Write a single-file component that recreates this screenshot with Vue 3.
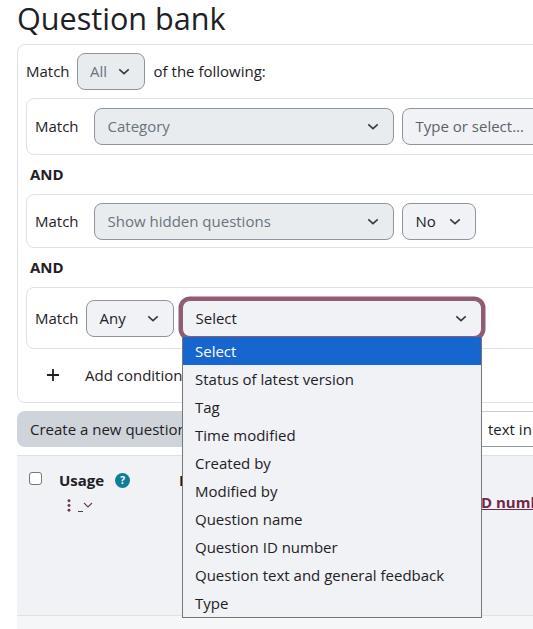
<script setup>
const options = ['Select','Status of latest version','Tag','Time modified','Created by','Modified by','Question name','Question ID number','Question text and general feedback','Type']
</script>

<template>
  <div class="page">
    <h1 class="title">Question bank</h1>
    <section class="filter">
      <div class="top-row">
        <span class="up">Match</span>
        <div class="sel off w-all"><span class="up">All</span><svg class="chev" viewBox="0 0 14 8"><path d="M1.5 1.5 7 6.5l5.5-5"/></svg></div>
        <span class="following up">of the following:</span>
      </div>
      <div class="cond c1">
        <span class="lbl up">Match</span>
        <div class="sel off w-main"><span class="up">Category</span><svg class="chev" viewBox="0 0 14 8"><path d="M1.5 1.5 7 6.5l5.5-5"/></svg></div>
        <div class="sel w-type"><span class="muted up">Type or select...</span></div>
      </div>
      <div class="and a1">AND</div>
      <div class="cond c2">
        <span class="lbl">Match</span>
        <div class="sel off w-main"><span>Show hidden questions</span><svg class="chev" viewBox="0 0 14 8"><path d="M1.5 1.5 7 6.5l5.5-5"/></svg></div>
        <div class="sel w-no"><span>No</span><svg class="chev" viewBox="0 0 14 8"><path d="M1.5 1.5 7 6.5l5.5-5"/></svg></div>
      </div>
      <div class="and a2">AND</div>
      <div class="cond c3">
        <span class="lbl">Match</span>
        <div class="sel w-any"><span>Any</span><svg class="chev" viewBox="0 0 14 8"><path d="M1.5 1.5 7 6.5l5.5-5"/></svg></div>
        <div class="focus-wrap">
          <div class="sel focused"><span>Select</span><svg class="chev" viewBox="0 0 14 8"><path d="M1.5 1.5 7 6.5l5.5-5"/></svg></div>
          <ul class="menu">
            <li v-for="(o, i) in options" :key="o" :class="{ active: i === 0 }">{{ o }}</li>
          </ul>
        </div>
      </div>
      <div class="add">
        <svg class="plus" viewBox="0 0 14 14"><path d="M7 1v12M1 7h12"/></svg>
        <span>Add condition</span>
      </div>
    </section>

    <div class="actions">
      <button class="create">Create a new question ...</button>
      <div class="search"><span class="hint"></span><span class="search-text">text in question</span></div>
    </div>

    <div class="table-head">
      <div class="check-col"><span class="check"></span></div>
      <div class="usage-col">
        <div class="usage-title"><b>Usage</b><span class="help">?</span></div>
        <div class="usage-menu">
          <svg class="kebab" viewBox="0 0 4 14"><circle cx="2" cy="2" r="1.6"/><circle cx="2" cy="7" r="1.6"/><circle cx="2" cy="12" r="1.6"/></svg>
          <span class="dash"></span>
          <svg class="mini" viewBox="0 0 10 6"><path d="M1 1l4 4 4-4"/></svg>
        </div>
      </div>
      <div class="last-col"><b>Last used</b></div>
      <div class="id-col"><a>ID number</a></div>
    </div>
    <div class="table-foot"></div>
  </div>
</template>

<style>
html, body { margin: 0; background: #fff; }
</style>

<style scoped>
.page {
  width: 533px;
  height: 629px;
  overflow: hidden;
  box-sizing: border-box;
  padding: 0 0 0 17px;
  font-family: "Open Sans", "Noto Sans", sans-serif;
  font-size: 15px;
  color: #1d2125;
  background: #fff;
}
.title {
  margin: 0;
  height: 44px;
  font-size: 30.6px;
  line-height: 36px;
  font-weight: 400;
  white-space: nowrap;
}
.up { transform: translateY(-1px); }
.filter {
  width: 560px;
  height: 359px;
  box-sizing: border-box;
  border: 1px solid #dee2e6;
  border-radius: 8px;
  padding: 8px 8px 0;
}
.top-row {
  display: flex;
  align-items: center;
  height: 37px;
  gap: 7px;
}
.following { margin-left: 2px; }
.sel {
  display: flex;
  align-items: center;
  justify-content: space-between;
  box-sizing: border-box;
  height: 37px;
  padding: 0 14px 0 12.5px;
  flex-shrink: 0;
  border: 1px solid #8f959e;
  border-radius: 8px;
  background: #f1f2f6;
  white-space: nowrap;
}
.off { background: #e9ecef; color: #6a737b; }
.w-all { width: 68px; }
.w-main { width: 300px; }
.w-type { width: 160px; }
.w-no { width: 74px; }
.w-any { width: 88px; }
.muted { color: #5c6268; }
.chev {
  width: 12px;
  height: 7px;
  fill: none;
  stroke: #343a40;
  stroke-width: 1.8;
  flex-shrink: 0;
}
.cond {
  display: flex;
  align-items: center;
  box-sizing: border-box;
  border: 1px solid #dee2e6;
  border-radius: 8px;
  padding-left: 8px;
  width: 540px;
  white-space: nowrap;
}
.lbl { width: 59px; flex-shrink: 0; }
.c1 { height: 57px; margin-top: 8px; }
.c2 { height: 54px; }
.c3 { height: 62px; }
.c1 .sel + .sel, .c2 .sel + .sel { margin-left: 8px; }
.c3 .lbl { width: 51px; }
.and {
  font-weight: 700;
  padding-left: 4px;
  line-height: 20px;
}
.a1 { margin: 9px 0 10px; }
.a2 { margin: 9px 0 10px; }
.focus-wrap {
  position: relative;
  margin-left: 8px;
  flex-shrink: 0;
}
.focused {
  width: 300px;
  height: 37px;
  border-color: #8f5d72;
  box-shadow: 0 0 0 3.5px #8f5d72;
}
.menu {
  position: absolute;
  z-index: 5;
  top: 37px;
  left: 0;
  width: 300px;
  box-sizing: border-box;
  margin: 0;
  padding: 0;
  list-style: none;
  background: #f1f2f6;
  border: 1px solid #767676;
  border-top: 0;
  height: 281px;
}
.menu li {
  height: 28px;
  line-height: 28px;
  padding-left: 12px;
  white-space: nowrap;
}
.menu li.active { background: #1766d0; color: #fff; }
.add {
  display: flex;
  align-items: center;
  height: 52px;
  padding-left: 20px;
  gap: 25px;
  white-space: nowrap;
}
.plus {
  width: 14px;
  height: 14px;
  fill: none;
  stroke: #1d2125;
  stroke-width: 1.8;
}
.actions {
  display: flex;
  height: 36px;
  margin-top: 8px;
  white-space: nowrap;
}
.create {
  width: 240px;
  flex-shrink: 0;
  border: 0;
  border-radius: 8px 0 0 8px;
  background: #ced4da;
  color: #1d2125;
  font: inherit;
  text-align: left;
  padding: 0 13px;
}
.search {
  display: flex;
  align-items: center;
  flex: 1;
  min-width: 300px;
  box-sizing: border-box;
  border-top: 1px solid #c9ced4;
  border-bottom: 1px solid #8f959e;
  padding-left: 225px;
  gap: 6px;
}
.hint {
  width: 2px;
  height: 8px;
  background: #9fc9dc;
}
.table-head {
  display: flex;
  width: 560px;
  height: 161px;
  margin-top: 8px;
  box-sizing: border-box;
  background: #f1f2f6;
  border-top: 1px solid #dee2e6;
  border-bottom: 1px solid #dee2e6;
}
.check-col { width: 42px; flex-shrink: 0; padding: 16px 0 0 12px; box-sizing: border-box; }
.check {
  display: block;
  width: 13px;
  height: 13px;
  box-sizing: border-box;
  border: 1px solid #767676;
  border-radius: 3px;
  background: #fff;
}
.usage-col { width: 120px; flex-shrink: 0; padding-top: 14px; box-sizing: border-box; }
.usage-title { display: flex; align-items: center; gap: 11px; height: 20px; }
.help {
  width: 15px;
  height: 15px;
  border-radius: 50%;
  background: #0f7f96;
  color: #fff;
  font-size: 10px;
  font-weight: 700;
  line-height: 15px;
  text-align: center;
}
.usage-menu {
  display: flex;
  align-items: flex-start;
  padding: 9px 0 0 8px;
}
.kebab { width: 4px; height: 13px; fill: #6d3a55; }
.dash { width: 5px; height: 1px; background: #444; margin: 12px 0 0 7px; }
.mini {
  width: 10px;
  height: 6px;
  margin: 3px 0 0 0;
  fill: none;
  stroke: #6d3a55;
  stroke-width: 1.1;
}
.last-col { width: 297px; flex-shrink: 0; padding-top: 14px; line-height: 20px; white-space: nowrap; }
.id-col { padding-top: 36px; line-height: 20px; white-space: nowrap; }
.id-col a {
  font-weight: 700;
  color: #6d2a4a;
  text-decoration: underline;
}
.table-foot {
  width: 560px;
  height: 14px;
  background: #f5f6f8;
}
</style>
